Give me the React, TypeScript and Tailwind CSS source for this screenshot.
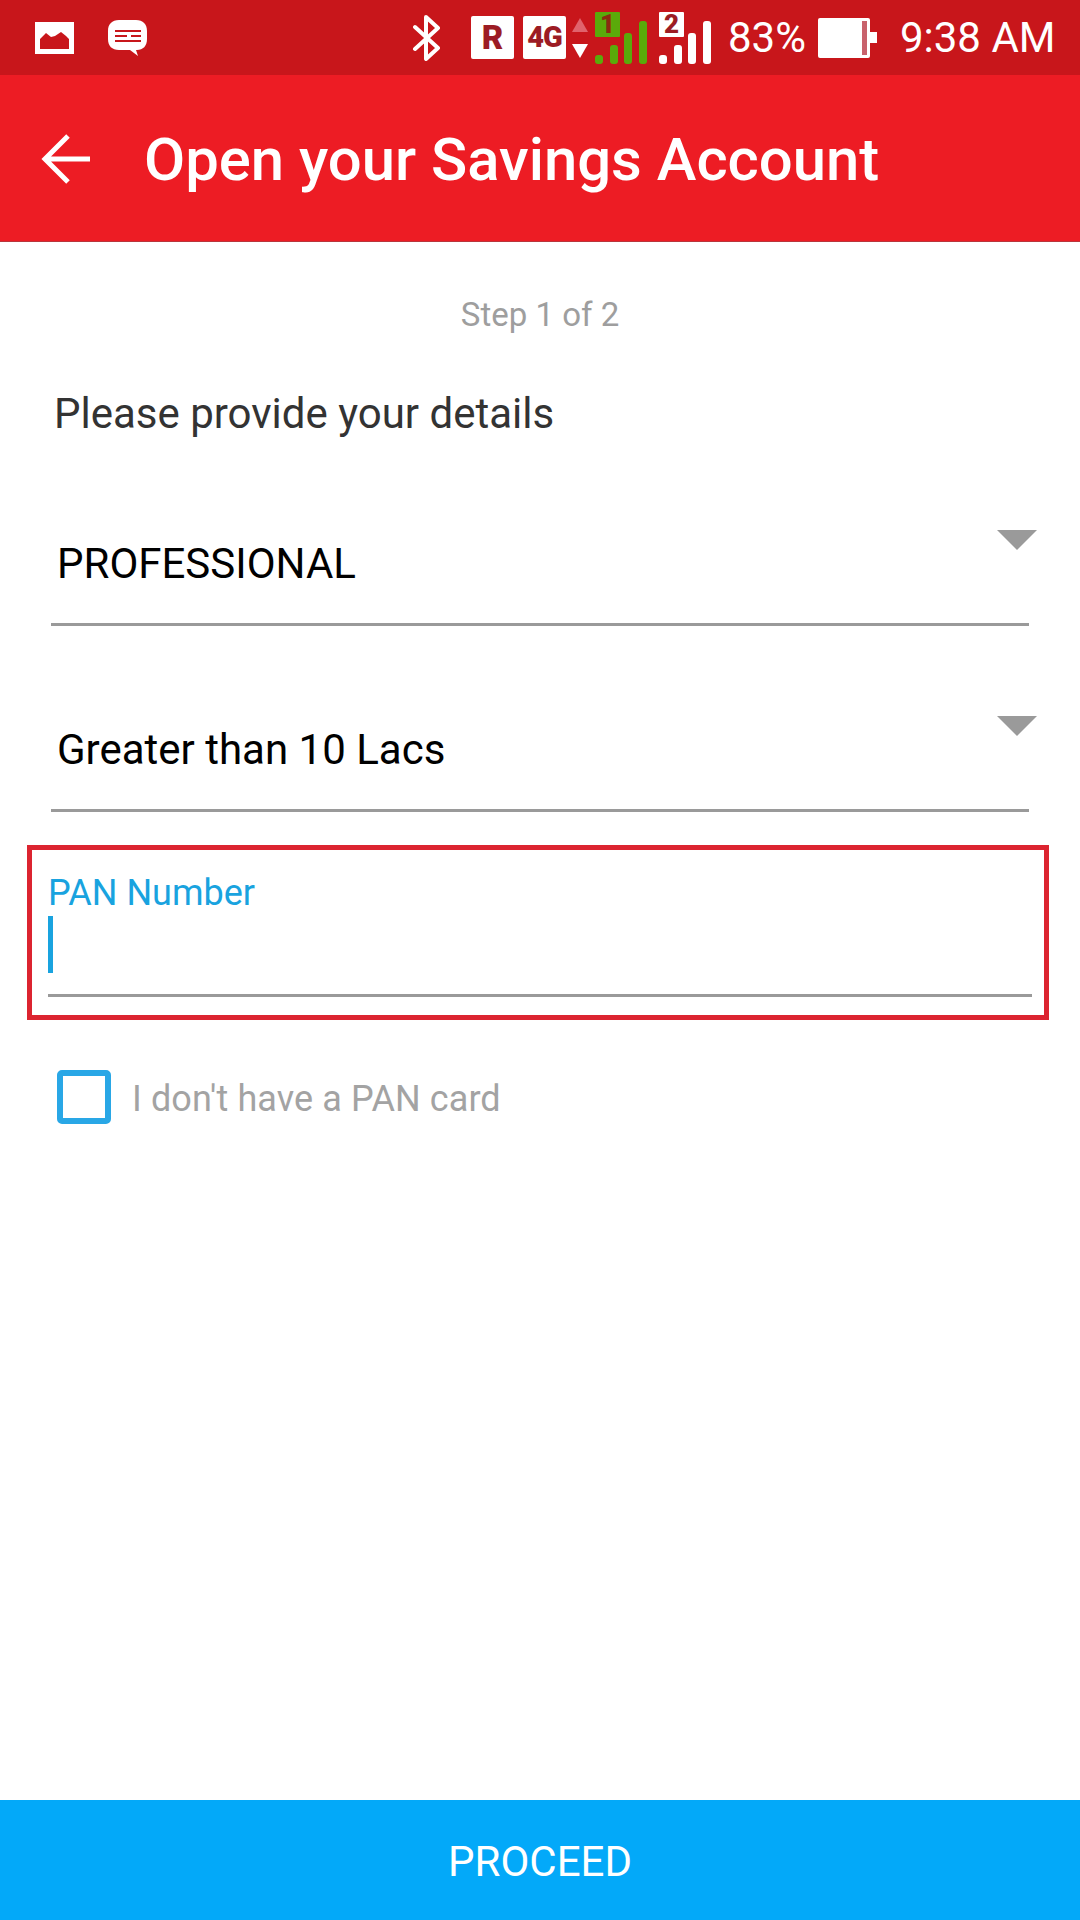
import * as React from "react";

const roboto = "font-['Roboto',sans-serif]";

// ---------------------------------------------------------------------------
// Status bar icons
// ---------------------------------------------------------------------------

function GalleryIcon() {
  return (
    <svg width="39" height="32" viewBox="0 0 39 32" className="block">
      <rect width="39" height="32" fill="#fff" />
      <path d="M5 27V17l6-6 5 4 4-1 6-4 5 4 3 3v10z" fill="#c8161b" />
    </svg>
  );
}

function MessageIcon() {
  return (
    <svg width="39" height="36" viewBox="0 0 39 36" className="block">
      <path d="M11 0h17c7 0 11 4 11 11v8c0 7-4 11-10 11h-1l2 6-8-6H11C4 30 0 26 0 19v-8C0 4 4 0 11 0z" fill="#fff" />
      <path d="M7 10h26v2H7zM7 15h12v2H7zM23 15h10v2H23zM7 20h26v2H7z" fill="#c8161b" />
    </svg>
  );
}

function BluetoothIcon() {
  return (
    <svg width="30" height="46" viewBox="0 0 30 46" className="block" fill="none" stroke="#fff" strokeWidth="4" strokeLinejoin="round" strokeLinecap="round">
      <path d="M3 12l23 21-12 11V2l12 11L3 34" />
    </svg>
  );
}

function SignalBars({ color, badge, badgeText, textColor }: { color: string; badge: string; badgeText: string; textColor: string }) {
  const heights = [9, 19, 31, 43];
  return (
    <div className="relative flex h-[52px] w-[52px] items-end justify-between">
      {heights.map((h, i) => (
        <span key={i} className="block w-[8px] rounded-[3px]" style={{ height: h, background: color }} />
      ))}
      <span
        className={`absolute left-0 top-0 flex h-[25px] w-[25px] items-center justify-center rounded-[1px] text-[26px] font-black leading-none ${roboto}`}
        style={{ background: badge, color: textColor }}
      >
        {badgeText}
      </span>
    </div>
  );
}

function StatusBar() {
  return (
    <div className={`flex h-[75px] items-center bg-[#c8161b] text-white ${roboto}`}>
      <div className="ml-[35px]"><GalleryIcon /></div>
      <div className="ml-[34px]"><MessageIcon /></div>
      <div className="ml-[265px]"><BluetoothIcon /></div>
      <div className="ml-[29px] flex h-[43px] w-[43px] items-center justify-center rounded-[2px] bg-white text-[33px] font-black text-[#9c1c24]">R</div>
      <div className="ml-[9px] flex h-[43px] w-[43px] items-center justify-center rounded-[2px] bg-white text-[29px] font-black tracking-[-1px] text-[#9c1c24]">4G</div>
      <div className="ml-[6px] flex h-[40px] w-[16px] flex-col justify-between">
        <svg width="16" height="14" viewBox="0 0 16 14" className="block"><path d="M8 0l8 14H0z" fill="#e0636c" /></svg>
        <svg width="16" height="14" viewBox="0 0 16 14" className="block"><path d="M0 0h16L8 14z" fill="#fff" /></svg>
      </div>
      <div className="ml-[7px]"><SignalBars color="#5aaa0a" badge="#5aaa0a" badgeText="1" textColor="#8c2a10" /></div>
      <div className="ml-[12px]"><SignalBars color="#fff" badge="#fff" badgeText="2" textColor="#9c1c24" /></div>
      <span className="ml-[17px] text-[42px] leading-none">83%</span>
      <div className="ml-[12px] flex items-center">
        <div className="relative h-[40px] w-[52px] rounded-[2px] bg-white">
          <span className="absolute right-[3px] top-[3px] h-[34px] w-[5px] bg-[#c8626c]" />
        </div>
        <span className="h-[11px] w-[7px] bg-white" />
      </div>
      <span className="ml-[23px] text-[42px] leading-none">9:38 AM</span>
    </div>
  );
}

// ---------------------------------------------------------------------------
// Form parts
// ---------------------------------------------------------------------------

function SelectField({ value }: { value: string }) {
  return (
    <div className="relative mx-[51px] flex h-[122px] items-center border-b-[3px] border-[#9a9a9a] pl-[6px]">
      <span className="text-[42px] leading-none text-black">{value}</span>
      <svg width="40" height="20" viewBox="0 0 40 20" className="absolute right-[-8px] top-[26px]">
        <path d="M0 0h40L20 20z" fill="#9a9a9a" />
      </svg>
    </div>
  );
}

export default function App() {
  return (
    <div className={`flex h-[1920px] w-[1080px] flex-col bg-white ${roboto}`}>
      <StatusBar />

      {/* Toolbar */}
      <div className="flex h-[167px] items-center border-b border-[#b9363c] bg-[#ed1c24] pt-[2px]">
        <svg width="50" height="50" viewBox="0 0 50 50" className="ml-[41px] block" fill="none" stroke="#fff" strokeWidth="5">
          <path d="M49 25H5M27 2L4 25l23 23" />
        </svg>
        <h1 className="ml-[53px] mt-[3px] text-[59.8px] font-medium leading-none text-white">Open your Savings Account</h1>
      </div>

      <p className="mt-[55px] text-center text-[33px] leading-[36px] text-[#9e9e9e]">Step 1 of 2</p>
      <p className="ml-[54px] mt-[58px] text-[42px] leading-[46px] text-[#333]">Please provide your details</p>

      <div className="mt-[67px]">
        <SelectField value="PROFESSIONAL" />
      </div>
      <div className="mt-[64px]">
        <SelectField value="Greater than 10 Lacs" />
      </div>

      {/* Highlighted PAN input */}
      <div className="ml-[27px] mr-[31px] mt-[33px] flex h-[175px] flex-col border-[5px] border-[#dc2430] pl-[16px] pr-[12px] pt-[23px]">
        <span className="text-[36px] leading-[40px] text-[#19a3df]">PAN Number</span>
        <div className="h-[84px] border-b-[3px] border-[#9a9a9a] pt-[3px]">
          <span className="block h-[57px] w-[5px] bg-[#19a3df]" />
        </div>
      </div>

      <div className="ml-[57px] mt-[50px] flex items-center">
        <span className="block h-[54px] w-[54px] rounded-[5px] border-[6px] border-[#29a7e6]" />
        <span className="ml-[21px] pt-[3px] text-[36px] leading-none tracking-[0.1px] text-[#a3a3a3]">I don't have a PAN card</span>
      </div>

      <button className="mt-auto h-[120px] w-full bg-[#03a9f9] pt-[2px] text-[42px] text-white">PROCEED</button>
    </div>
  );
}
